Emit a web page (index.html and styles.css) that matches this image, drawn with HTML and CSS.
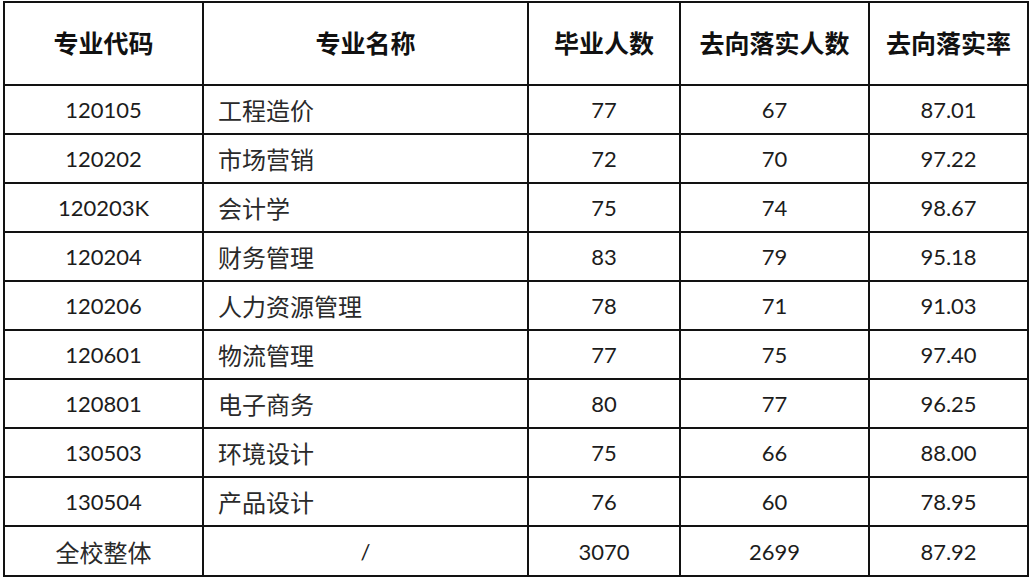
FILE: index.html
```html
<!DOCTYPE html>
<html lang="zh">
<head>
<meta charset="utf-8">
<link rel="stylesheet" href="styles.css">
</head>
<body>
<table class="grid">
  <colgroup>
    <col class="c1"><col class="c2"><col class="c3"><col class="c4"><col class="c5">
  </colgroup>
  <thead>
    <tr><th>专业代码</th><th>专业名称</th><th>毕业人数</th><th>去向落实人数</th><th>去向落实率</th></tr>
  </thead>
  <tbody>
    <tr><td>120105</td><td class="name">工程造价</td><td>77</td><td>67</td><td>87.01</td></tr>
    <tr><td>120202</td><td class="name">市场营销</td><td>72</td><td>70</td><td>97.22</td></tr>
    <tr><td>120203K</td><td class="name">会计学</td><td>75</td><td>74</td><td>98.67</td></tr>
    <tr><td>120204</td><td class="name">财务管理</td><td>83</td><td>79</td><td>95.18</td></tr>
    <tr><td>120206</td><td class="name">人力资源管理</td><td>78</td><td>71</td><td>91.03</td></tr>
    <tr><td>120601</td><td class="name">物流管理</td><td>77</td><td>75</td><td>97.40</td></tr>
    <tr><td>120801</td><td class="name">电子商务</td><td>80</td><td>77</td><td>96.25</td></tr>
    <tr><td>130503</td><td class="name">环境设计</td><td>75</td><td>66</td><td>88.00</td></tr>
    <tr><td>130504</td><td class="name">产品设计</td><td>76</td><td>60</td><td>78.95</td></tr>
    <tr class="total"><td>全校整体</td><td>/</td><td>3070</td><td>2699</td><td>87.92</td></tr>
  </tbody>
</table>
</body>
</html>
```
FILE: styles.css
```css
html, body {
  margin: 0;
  padding: 0;
  background: #ffffff;
}
body {
  padding: 1px 0 0 3px;
  font-family: Lato, "Noto Sans CJK SC", sans-serif;
  color: #1c1c1c;
}
.grid {
  border-collapse: collapse;
  table-layout: fixed;
  width: 1024px;
}
.c1 { width: 199px; }
.c2 { width: 325px; }
.c3 { width: 152px; }
.c4 { width: 189px; }
.c5 { width: 159px; }
.grid th, .grid td {
  border: 2px solid #121212;
  text-align: center;
  padding: 0;
  white-space: nowrap;
}
.grid th {
  height: 77px;
  font-family: "Noto Sans CJK SC", sans-serif;
  font-weight: 700;
  font-size: 25px;
  color: #111;
  padding-bottom: 4px;
}
.grid td {
  height: 47px;
  font-size: 22px;
  font-weight: 400;
}
.grid td.name {
  text-align: left;
  padding-left: 14px;
  font-family: "Noto Sans CJK SC", sans-serif;
  font-size: 24px;
  color: #2a2a2a;
}
.grid tr.total td {
  height: 48px;
}
.grid tr.total td:first-child {
  font-family: "Noto Sans CJK SC", sans-serif;
  font-size: 24px;
  color: #2a2a2a;
}
```
